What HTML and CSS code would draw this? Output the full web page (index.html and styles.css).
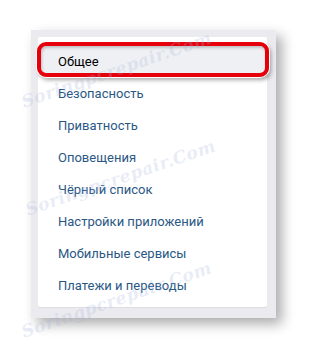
FILE: index.html
```html
<!DOCTYPE html>
<html lang="ru">
<head>
<meta charset="utf-8">
<link rel="stylesheet" href="styles.css">
</head>
<body>
<div class="panel">
  <nav class="card">
    <div class="row row-active"><span class="label">Общее</span><span class="mark"></span></div>
    <div class="row"><span class="label">Безопасность</span></div>
    <div class="row"><span class="label">Приватность</span></div>
    <div class="row"><span class="label">Оповещения</span></div>
    <div class="row"><span class="label">Чёрный список</span></div>
    <div class="row"><span class="label">Настройки приложений</span></div>
    <div class="row"><span class="label">Мобильные сервисы</span></div>
    <div class="row"><span class="label">Платежи и переводы</span></div>
  </nav>
</div>
<div class="wm wm1">Soringpcrepair.Com</div>
<div class="wm wm2">Soringpcrepair.Com</div>
<div class="wm wm3">Soringpcrepair.Com</div>
</body>
</html>
```
FILE: styles.css
```css
html, body {
  margin: 0;
  padding: 0;
  background: #ffffff;
}
body {
  width: 309px;
  height: 351px;
  overflow: hidden;
  position: relative;
  font-family: Roboto, "Liberation Sans", sans-serif;
}
.panel {
  margin: 30px 0 0 31px;
  width: 245px;
  height: 288px;
  box-sizing: border-box;
  padding: 7px 9px 11px 7px;
  background: #ebebef;
  box-shadow: 6px 6px 12px rgba(0, 0, 0, 0.33);
}
.card {
  background: #ffffff;
  border-radius: 2px;
  padding: 8px 0 6px;
  display: flex;
  flex-direction: column;
  box-shadow: 0 1px 0 #dcdee3;
}
.row {
  position: relative;
  height: 32px;
  display: flex;
  align-items: center;
  padding-left: 20px;
  font-size: 13px;
  color: #2a5885;
}
.row-active {
  background: #eef0f3;
  color: #000000;
}
.mark {
  position: absolute;
  left: -1px;
  right: -2px;
  top: -3px;
  bottom: 0;
  border: 4px solid #e6000c;
  border-radius: 9px;
  box-shadow: 0 0 0 1px #ffffff, 2px 3px 4px rgba(0, 0, 0, 0.35), inset 1px 2px 3px rgba(0, 0, 0, 0.2);
}
.wm {
  position: absolute;
  font-family: "DejaVu Serif", serif;
  font-style: italic;
  font-weight: bold;
  font-size: 17px;
  letter-spacing: 0.5px;
  color: rgba(165, 180, 220, 0.26);
  transform: rotate(-19deg);
  transform-origin: left center;
  white-space: nowrap;
  pointer-events: none;
}
.wm1 { left: 22px; top: 92px; }
.wm2 { left: 26px; top: 200px; }
.wm3 { left: 22px; top: 322px; }
```
